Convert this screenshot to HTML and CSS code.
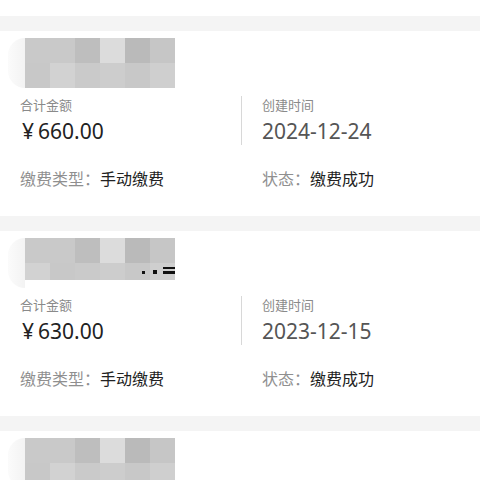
FILE: index.html
```html
<!DOCTYPE html>
<html lang="zh-CN">
<head>
<meta charset="utf-8">
<link rel="stylesheet" href="styles.css">
</head>
<body>
<div class="list">
  <div class="card">
    <div class="head">
      <div class="blob"></div>
      <div class="mosaic tall">
        <i class="a"></i><i class="a"></i><i class="b"></i><i class="c"></i><i class="d"></i><i class="e"></i>
        <i class="f"></i><i class="g"></i><i class="h"></i><i class="i"></i><i class="j"></i><i class="k"></i>
      </div>
    </div>
    <div class="info">
      <div class="cell left">
        <div class="label">合计金额</div>
        <div class="amount"><span class="cur">¥</span>660.00</div>
      </div>
      <div class="cell right">
        <div class="label">创建时间</div>
        <div class="date">2024-12-24</div>
      </div>
    </div>
    <div class="meta">
      <div class="mcell"><span class="mk">缴费类型：</span><span class="mv">手动缴费</span></div>
      <div class="mcell r"><span class="mk">状态：</span><span class="mv">缴费成功</span></div>
    </div>
  </div>

  <div class="card">
    <div class="head">
      <div class="blob"></div>
      <div class="mosaic short">
        <i class="a"></i><i class="a"></i><i class="b"></i><i class="c"></i><i class="d"></i><i class="e"></i>
        <i class="g"></i><i class="f"></i><i class="h"></i><i class="i"></i><i class="j"></i><i class="k"></i>
        <span class="leak l1"></span><span class="leak l2"></span><span class="leak l3"></span>
      </div>
    </div>
    <div class="info">
      <div class="cell left">
        <div class="label">合计金额</div>
        <div class="amount"><span class="cur">¥</span>630.00</div>
      </div>
      <div class="cell right">
        <div class="label">创建时间</div>
        <div class="date">2023-12-15</div>
      </div>
    </div>
    <div class="meta">
      <div class="mcell"><span class="mk">缴费类型：</span><span class="mv">手动缴费</span></div>
      <div class="mcell r"><span class="mk">状态：</span><span class="mv">缴费成功</span></div>
    </div>
  </div>

  <div class="card">
    <div class="head">
      <div class="blob"></div>
      <div class="mosaic tall">
        <i class="a"></i><i class="a"></i><i class="b"></i><i class="c"></i><i class="d"></i><i class="e"></i>
        <i class="f"></i><i class="g"></i><i class="h"></i><i class="i"></i><i class="j"></i><i class="k"></i>
      </div>
    </div>
  </div>
</div>
</body>
</html>
```

FILE: styles.css
```css
html, body {
  margin: 0;
  padding: 0;
  background: #ffffff;
}
body {
  font-family: "Noto Sans CJK SC", "Noto Sans", sans-serif;
  color: #222;
}
.list {
  padding-top: 16px;
}
.card {
  border-top: 15px solid #f4f4f4;
  background: #fff;
  padding-bottom: 27px;
}
.head {
  height: 58px;
  padding-top: 7px;
  box-sizing: border-box;
  display: flex;
  align-items: flex-start;
}
.blob {
  width: 17px;
  height: 50px;
  margin-left: 8px;
  border-radius: 17px 0 0 17px;
  background: linear-gradient(90deg, #fbfbfb, #f3f3f3);
}
.mosaic {
  position: relative;
  display: grid;
  grid-template-columns: repeat(6, 25px);
  width: 150px;
}
.mosaic.tall { grid-template-rows: 25px 25px; }
.mosaic.short { grid-template-rows: 25px 17px; }
.mosaic i { display: block; }
.mosaic .a { background: #c9c9c9; }
.mosaic .b { background: #bebebe; }
.mosaic .c { background: #dcdcdc; }
.mosaic .d { background: #bababa; }
.mosaic .e { background: #c6c6c6; }
.mosaic .f { background: #c8c8c8; }
.mosaic .g { background: #d2d2d2; }
.mosaic .h { background: #cacaca; }
.mosaic .i { background: #cdcdcd; }
.mosaic .j { background: #c8c8c8; }
.mosaic .k { background: #cfcfcf; }
.leak {
  position: absolute;
  background: #111;
}
.leak.l1 { left: 117px; top: 33px; width: 3px; height: 3px; }
.leak.l2 { left: 128px; top: 32px; width: 4px; height: 4px; }
.leak.l3 { left: 138px; top: 29px; width: 12px; height: 7px; background: linear-gradient(#111 0 2px, transparent 2px 4px, #111 4px); }
.info {
  display: grid;
  grid-template-columns: 221px 1fr;
  padding-left: 20px;
  margin-top: 7px;
}
.cell.right {
  border-left: 1px solid #d8d8d8;
  padding-left: 20px;
}
.label {
  font-size: 13px;
  line-height: 18px;
  color: #8a8a8a;
}
.amount, .date {
  font-size: 21px;
  line-height: 28px;
  margin-top: 3px;
  font-family: "Noto Sans", "Noto Sans CJK SC", sans-serif;
}
.amount { color: #222; }
.date { color: #555; }
.cur { margin-right: 4px; margin-left: 2px; }
.meta {
  display: grid;
  grid-template-columns: 221px 1fr;
  padding-left: 20px;
  margin-top: 22px;
  font-size: 16px;
  line-height: 22px;
}
.mcell.r { padding-left: 21px; }
.mk { color: #8f8f8f; }
.mv { color: #222; }
```
